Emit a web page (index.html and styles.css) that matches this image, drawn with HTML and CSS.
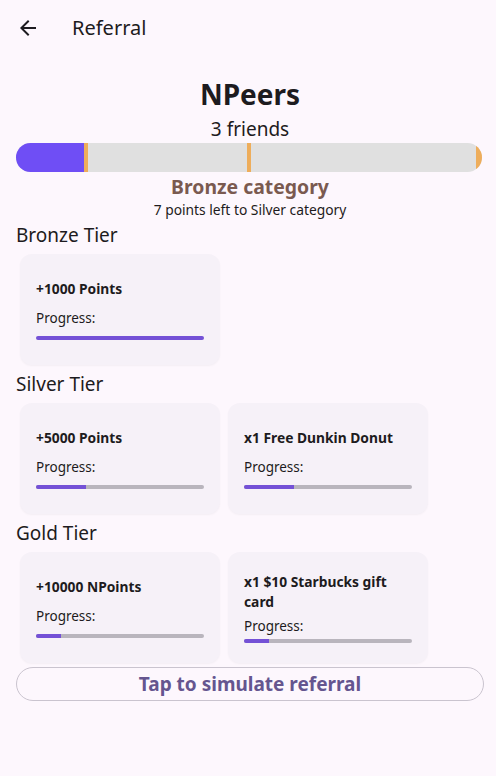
FILE: index.html
```html
<!DOCTYPE html>
<html lang="en">
<head>
    <meta charset="UTF-8">
    <meta name="viewport" content="width=device-width, initial-scale=1.0">
    <title>Referral</title>
    <link rel="stylesheet" href="styles.css">
</head>
<body>

<div class="app-bar">
    <button class="back-button" aria-label="Back">
        <svg width="24" height="24" viewBox="0 0 24 24"><path d="M20 11H7.83l5.59-5.59L12 4l-8 8 8 8 1.41-1.41L7.83 13H20v-2z" fill="#1d1b20"/></svg>
    </button>
    <h1 class="app-title">Referral</h1>
</div>

<div class="content">
    <h2 class="group-name">NPeers</h2>
    <div class="friends">3 friends</div>

    <div class="level-bar">
        <div class="level-fill" style="width: 15%"></div>
        <span class="marker" style="left: 15%"></span>
        <span class="marker" style="left: 50%"></span>
        <span class="marker marker-end"></span>
    </div>

    <div class="category">Bronze category</div>
    <div class="category-hint">7 points left to Silver category</div>

    <h3 class="tier-title">Bronze Tier</h3>
    <div class="tier-row">
        <div class="reward-card">
            <div class="reward-name">+1000 Points</div>
            <div class="reward-label">Progress:</div>
            <div class="reward-track"><div class="reward-fill" style="width: 100%"></div></div>
        </div>
    </div>

    <h3 class="tier-title">Silver Tier</h3>
    <div class="tier-row">
        <div class="reward-card">
            <div class="reward-name">+5000 Points</div>
            <div class="reward-label">Progress:</div>
            <div class="reward-track"><div class="reward-fill" style="width: 30%"></div></div>
        </div>
        <div class="reward-card">
            <div class="reward-name">x1 Free Dunkin Donut</div>
            <div class="reward-label">Progress:</div>
            <div class="reward-track"><div class="reward-fill" style="width: 30%"></div></div>
        </div>
    </div>

    <h3 class="tier-title">Gold Tier</h3>
    <div class="tier-row">
        <div class="reward-card">
            <div class="reward-name">+10000 NPoints</div>
            <div class="reward-label">Progress:</div>
            <div class="reward-track"><div class="reward-fill" style="width: 15%"></div></div>
        </div>
        <div class="reward-card">
            <div class="reward-name">x1 $10 Starbucks gift card</div>
            <div class="reward-label">Progress:</div>
            <div class="reward-track"><div class="reward-fill" style="width: 15%"></div></div>
        </div>
    </div>

    <button class="simulate-button">Tap to simulate referral</button>
</div>

</body>
</html>
```

FILE: styles.css
```css
body {
    font-family: "Noto Sans", "Open Sans", sans-serif;
    background-color: #fdf7fd;
    color: #1d1b20;
    margin: 0;
}
.app-bar {
    display: flex;
    align-items: center;
    height: 56px;
    padding-left: 16px;
}
.back-button {
    display: flex;
    padding: 0;
    border: none;
    background: none;
    cursor: pointer;
}
.app-title {
    margin: 0 0 2px 32px;
    font-size: 20px;
    font-weight: 400;
}
.content {
    padding: 0 12px 0 16px;
    display: flex;
    flex-direction: column;
}
.group-name {
    margin: 19px 0 0;
    font-size: 28px;
    font-weight: 700;
    line-height: 38px;
    text-align: center;
}
.friends {
    margin-top: 1px;
    font-size: 19px;
    line-height: 30px;
    text-align: center;
}
.level-bar {
    position: relative;
    height: 29px;
    margin: -1px 2px 0 0;
    background-color: #e0e0e0;
    border-radius: 15px;
    overflow: hidden;
}
.level-fill {
    height: 100%;
    background-color: #6f4ef5;
}
.marker {
    position: absolute;
    top: 0;
    width: 4px;
    height: 100%;
    margin-left: -2px;
    background-color: #eead5b;
}
.marker-end {
    right: 0;
    width: 6px;
    border-radius: 0 15px 15px 0;
}
.category {
    margin-top: 2px;
    font-size: 19.4px;
    font-weight: 700;
    line-height: 26px;
    color: #7a5a50;
    text-align: center;
}
.category-hint {
    font-size: 13.8px;
    line-height: 20px;
    text-align: center;
}
.tier-title {
    margin: 0;
    font-size: 19px;
    font-weight: 400;
    line-height: 30px;
}
.tier-row {
    display: flex;
    gap: 8px;
    padding: 4px;
}
.reward-card {
    box-sizing: border-box;
    width: 200px;
    height: 111px;
    padding: 16px;
    display: flex;
    flex-direction: column;
    justify-content: space-evenly;
    background-color: #f6f1f8;
    border-radius: 12px;
    box-shadow: 0 1px 2px rgba(0, 0, 0, 0.04);
}
.reward-name {
    font-size: 13.8px;
    font-weight: 700;
    line-height: 20px;
}
.reward-label {
    font-size: 13.5px;
    line-height: 20px;
}
.reward-track {
    height: 4px;
    background-color: #b9b5bd;
    border-radius: 2px;
    overflow: hidden;
}
.reward-fill {
    height: 100%;
    background-color: #7451d6;
}
.simulate-button {
    height: 34px;
    padding: 0;
    border: 1px solid #cac4cf;
    border-radius: 17px;
    background: none;
    font-family: inherit;
    font-size: 19px;
    font-weight: 700;
    color: #65558f;
    cursor: pointer;
}
```
